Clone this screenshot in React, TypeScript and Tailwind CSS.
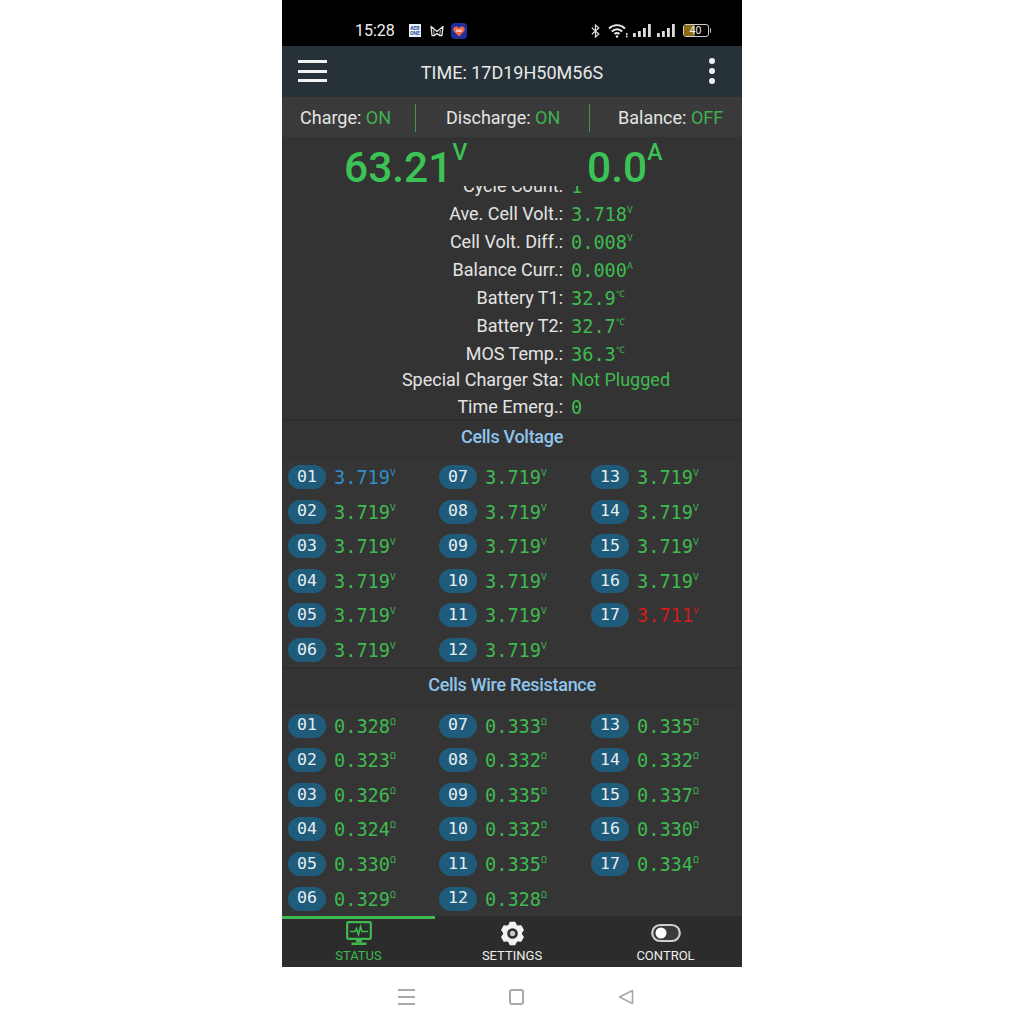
import React from "react";

const sans = "font-['Roboto','Liberation_Sans',sans-serif]";
const mono = "font-['DejaVu_Sans_Mono','Liberation_Mono',monospace]";

const details: [string, string, string][] = [
  ["Cycle Count:", "1", ""],
  ["Ave. Cell Volt.:", "3.718", "V"],
  ["Cell Volt. Diff.:", "0.008", "V"],
  ["Balance Curr.:", "0.000", "A"],
  ["Battery T1:", "32.9", "℃"],
  ["Battery T2:", "32.7", "℃"],
  ["MOS Temp.:", "36.3", "℃"],
];

const volts = ["3.719","3.719","3.719","3.719","3.719","3.719","3.719","3.719","3.719","3.719","3.719","3.719","3.719","3.719","3.719","3.719","3.711"];
const res = ["0.328","0.323","0.326","0.324","0.330","0.329","0.333","0.332","0.335","0.332","0.335","0.328","0.335","0.332","0.337","0.330","0.334"];

function Cell({ n, v, unit, tone }: { n: number; v: string; unit: string; tone: string }) {
  return (
    <div className="flex h-[34.6px] items-center pl-[6px]">
      <div className={`${mono} flex h-[24px] w-[38px] items-center justify-center rounded-full bg-[#1f5c7c] text-[16.5px] text-[#e8eef0]`}>
        {String(n).padStart(2, "0")}
      </div>
      <div className={`${mono} ml-[8px] mt-[2px] flex items-start text-[18.6px] leading-[24px] ${tone}`}>
        {v}
        <span className={`${sans} mt-[1px] text-[9px] leading-[12px]`}>{unit}</span>
      </div>
    </div>
  );
}

function CellGrid({ values, unit, first, last }: { values: string[]; unit: string; first?: string; last?: string }) {
  const col = (start: number, count: number) => (
    <div className="flex flex-col">
      {values.slice(start, start + count).map((v, i) => {
        const n = start + i + 1;
        let tone = "text-[#3fba50]";
        if (n === 1 && first) tone = first;
        if (n === 17 && last) tone = last;
        return <Cell key={n} n={n} v={v} unit={unit} tone={tone} />;
      })}
    </div>
  );
  return (
    <div className="grid h-[207.6px] grid-cols-[151px_152px_157px] bg-[#353535]">
      {col(0, 6)}
      {col(6, 6)}
      {col(12, 5)}
    </div>
  );
}

function Monitor() {
  return (
    <svg width="26" height="25" viewBox="0 0 26 25" fill="none" stroke="#3fba50">
      <rect x="1.2" y="1.2" width="23.6" height="16.6" rx="1" strokeWidth="2.2" />
      <path d="M4 10.500h5l1.500-3 2 6 2-8 1.500 5h6" strokeWidth="1.600" />
      <path d="M10 19h6v2.500h-6z" fill="#3fba50" stroke="none" />
      <path d="M5.500 21.500h15v2.500h-15z" fill="#3fba50" stroke="none" />
    </svg>
  );
}

function gearPath() {
  const c = 13;
  const pts: string[] = [];
  const p = (deg: number, r: number) => {
    const a = ((deg - 90) * Math.PI) / 180;
    return `${(c + r * Math.cos(a)).toFixed(2)} ${(c + r * Math.sin(a)).toFixed(2)}`;
  };
  for (let i = 0; i < 6; i++) {
    const a = i * 60;
    pts.push(p(a - 13, 12.5), p(a + 13, 12.5), p(a + 27, 9.8), p(a + 33, 9.8));
  }
  const hole = "M13 7.500a5.500 5.500 0 1 0 0 11a5.500 5.500 0 1 0 0-11z";
  return `M${pts.join("L")}z${hole}`;
}

function Gear() {
  return (
    <svg width="25" height="25" viewBox="0 0 26 26">
      <path d={gearPath()} fill="#f2f2f2" fillRule="evenodd" />
      <circle cx="13" cy="13" r="2.800" fill="#c8c8c8" />
    </svg>
  );
}

function Toggle() {
  return (
    <svg width="30" height="20" viewBox="0 0 30 20" fill="none">
      <rect x="1.2" y="2" width="27.6" height="16" rx="8" fill="#3a3a3a" stroke="#cfcfcf" strokeWidth="2.2" />
      <circle cx="10" cy="10" r="5.500" fill="#ffffff" />
    </svg>
  );
}

function Tab({ label, active, children }: { label: string; active?: boolean; children: React.ReactNode }) {
  return (
    <div className={`flex flex-col items-center border-t-[3px] ${active ? "border-[#3fba50] text-[#3fba50]" : "border-transparent text-[#eeeeee]"}`}>
      <div className="flex h-[28px] items-center justify-center">{children}</div>
      <div className="mt-[1px] text-[13px] leading-[16px]">{label}</div>
    </div>
  );
}

function StatusIcons() {
  return (
    <div className="ml-[14px] flex items-center">
      <div className="flex h-[13px] w-[12px] flex-col items-center justify-center bg-[#eef2f8] text-[5px] font-bold leading-[5px] text-[#2b4fa0]">
        <span>AEB</span>
        <span>ONE</span>
      </div>
      <svg className="ml-[9px]" width="14" height="12" viewBox="0 0 14 12" fill="none" stroke="#e4e4e4" strokeWidth="1.300" strokeLinejoin="round">
        <path d="M1 1.500 7 6.500l6-5-1 9H9.500L7 8.500 4.500 10.500H2z" />
        <path d="M3.500 5 4.500 10.500M10.500 5 9.500 10.500" strokeWidth="0.800" />
      </svg>
      <svg className="ml-[7px]" width="16" height="16" viewBox="0 0 16 16">
        <rect width="16" height="16" rx="4" fill="#1f2f9c" />
        <path d="M8 13.500 2.800 8.200C1.500 6.500 2.500 3.500 5 3.500c1.300 0 2.300.7 3 1.700.7-1 1.700-1.700 3-1.700 2.500 0 3.500 3 2.200 4.700z" fill="#f0683c" />
        <rect x="5" y="6.500" width="6" height="2.500" fill="#f7b9c8" />
      </svg>
    </div>
  );
}

function SystemRight() {
  return (
    <div className="flex items-center">
      <svg width="9" height="14" viewBox="0 0 9 14" fill="none" stroke="#e0e0e0" strokeWidth="1.200">
        <path d="M.8 3.800 7.800 10 4.500 13V1l3.300 3L.8 10.200" />
      </svg>
      <svg className="ml-[8px]" width="20" height="15" viewBox="0 0 20 15" fill="none" stroke="#ececec" strokeWidth="1.900">
        <path d="M1 5.500c4.500-4.500 11.500-4.500 16 0M3.800 8.500c3-3 7.400-3 10.400 0M6.500 11c1.500-1.300 3.500-1.300 5 0" />
        <circle cx="9" cy="13.500" r="1.200" fill="#ececec" stroke="none" />
        <circle cx="18.800" cy="11" r="0.900" fill="#ececec" stroke="none" />
        <circle cx="18.800" cy="13.500" r="0.900" fill="#ececec" stroke="none" />
      </svg>
      {[0, 1].map((k) => (
        <svg key={k} className={k ? "ml-[6px]" : "ml-[5px]"} width="18" height="13" viewBox="0 0 18 13" fill="#dcdcdc">
          <rect x="0" y="9" width="2.800" height="4" />
          <rect x="5" y="7" width="2.800" height="6" />
          <rect x="10" y="4" width="2.800" height="9" />
          <rect x="15" y="0" width="2.800" height="13" />
        </svg>
      ))}
      <div className="relative ml-[8px] flex h-[13px] w-[26px] items-center overflow-hidden rounded-[3px] border border-[#cfcfcf]">
        <div className="h-full w-[11px] bg-[#8f6a14]" />
        <span className="absolute inset-0 text-center text-[10.5px] leading-[11px] text-[#eeeeee]">40</span>
      </div>
      <div className="ml-[1px] h-[5px] w-[1.5px] rounded-r bg-[#cfcfcf]" />
    </div>
  );
}

export default function App() {
  return (
    <div className={`${sans} flex h-[1024px] w-full justify-center overflow-hidden bg-white`}>
      <div className="flex w-[460px] flex-col">
        <div className="flex h-[46px] items-end justify-between bg-black pb-[5px] pl-[73px] pr-[31px]">
          <div className="flex h-[20px] items-center">
            <span className="text-[16px] leading-[20px] text-[#f0f0f0]">15:28</span>
            <StatusIcons />
          </div>
          <div className="flex h-[20px] items-center">
            <SystemRight />
          </div>
        </div>

        <div className="flex h-[51px] items-center bg-[#263238] pl-[16px] pr-[27px]">
          <div className="flex w-[29px] flex-col gap-[6.5px]">
            <div className="h-[3px] bg-[#f2f2f2]" />
            <div className="h-[3px] bg-[#f2f2f2]" />
            <div className="h-[3px] bg-[#f2f2f2]" />
          </div>
          <div className="mt-[3px] flex-1 text-center text-[18px] leading-[24px] text-[#e8e8e8]">TIME: 17D19H50M56S</div>
          <div className="flex w-[18px] flex-col items-end gap-[4px]">
            <div className="h-[6px] w-[6px] rounded-full bg-[#f2f2f2]" />
            <div className="h-[6px] w-[6px] rounded-full bg-[#f2f2f2]" />
            <div className="h-[6px] w-[6px] rounded-full bg-[#f2f2f2]" />
          </div>
        </div>

        <div className="flex h-[40px] items-center bg-[#3a3a3a] pl-[18px] pt-[2px] text-[18px] leading-[24px] text-[#e4e4e4]">
          <span className="w-[115px]">Charge: <span className="text-[#40b050]">ON</span></span>
          <div className="h-[28px] w-px bg-[#3c9a4a]" />
          <span className="ml-[30px] w-[143px]">Discharge: <span className="text-[#40b050]">ON</span></span>
          <div className="h-[28px] w-px bg-[#3c9a4a]" />
          <span className="ml-[28px]">Balance: <span className="text-[#40b050]">OFF</span></span>
        </div>

        <div className="flex h-[49px] items-start bg-[#333333] text-[#3cc356]">
          <div className="ml-[62px] flex w-[243px] items-start pt-[1px]">
            <span className="text-[42.5px] font-medium leading-[60px]">63.21</span>
            <span className="mt-[1px] text-[23px] font-medium leading-[28px]">V</span>
          </div>
          <div className="flex items-start pt-[1px]">
            <span className="text-[42.5px] font-medium leading-[60px]">0.0</span>
            <span className="mt-[1px] text-[23px] font-medium leading-[28px]">A</span>
          </div>
        </div>

        <div className="flex h-[235px] flex-col overflow-hidden border-b-2 border-[#2e2e2e] bg-[#333333]">
          <div className="-mt-[14px] flex flex-col">
            {details.map(([l, v, u]) => (
              <div key={l} className="flex h-[28px] items-center">
                <div className="w-[281px] text-right text-[18px] leading-[24px] text-[#e4e4e4]">{l}</div>
                <div className={`${mono} ml-[8px] mt-[2px] flex items-start text-[18.6px] leading-[24px] text-[#3fba50]`}>
                  {v}
                  <span className={`${sans} mt-[1px] text-[9px] leading-[12px]`}>{u}</span>
                </div>
              </div>
            ))}
            <div className="flex h-[24px] items-center">
              <div className="w-[281px] text-right text-[18px] leading-[24px] text-[#e4e4e4]">Special Charger Sta:</div>
              <div className="ml-[8px] text-[18px] leading-[24px] text-[#3fba50]">Not Plugged</div>
            </div>
            <div className="flex h-[30px] items-center">
              <div className="w-[281px] text-right text-[18px] leading-[24px] text-[#e4e4e4]">Time Emerg.:</div>
              <div className={`${mono} ml-[8px] mt-[2px] text-[18.6px] leading-[24px] text-[#3fba50]`}>0</div>
            </div>
          </div>
        </div>

        <div className="flex flex-1 flex-col bg-[#333333]">
          <div className="flex h-[39px] shrink-0 items-center justify-center pb-[8px] text-[18px] font-medium tracking-[-0.3px] text-[#8fc4ee]">Cells Voltage</div>
          <CellGrid values={volts} unit="V" first="text-[#2f8fc8]" last="text-[#d01c1c]" />
          <div className="flex h-[41px] shrink-0 items-center justify-center border-t-2 border-[#2e2e2e] pb-[9px] text-[18px] font-medium tracking-[-0.3px] text-[#8fc4ee]">Cells Wire Resistance</div>
          <CellGrid values={res} unit="Ω" />
        </div>

        <div className="grid h-[51px] shrink-0 grid-cols-[153px_154px_153px] bg-[#2c2c2c]">
          <Tab label="STATUS" active><Monitor /></Tab>
          <Tab label="SETTINGS"><Gear /></Tab>
          <Tab label="CONTROL"><Toggle /></Tab>
        </div>

        <div className="flex h-[57px] shrink-0 items-center justify-center gap-[94px] bg-white pl-[8px] pt-[2px]">
          <div className="flex w-[17px] flex-col gap-[5px]">
            <div className="h-[2px] bg-[#a8a8a8]" />
            <div className="h-[2px] bg-[#a8a8a8]" />
            <div className="h-[2px] bg-[#a8a8a8]" />
          </div>
          <div className="h-[16px] w-[15px] rounded-[3px] border-2 border-[#a8a8a8]" />
          <svg width="16" height="16" viewBox="0 0 16 16" fill="none" stroke="#a8a8a8" strokeWidth="1.6" strokeLinejoin="round">
            <path d="M1.500 8 14.500 1.500v13z" />
          </svg>
        </div>
      </div>
    </div>
  );
}
